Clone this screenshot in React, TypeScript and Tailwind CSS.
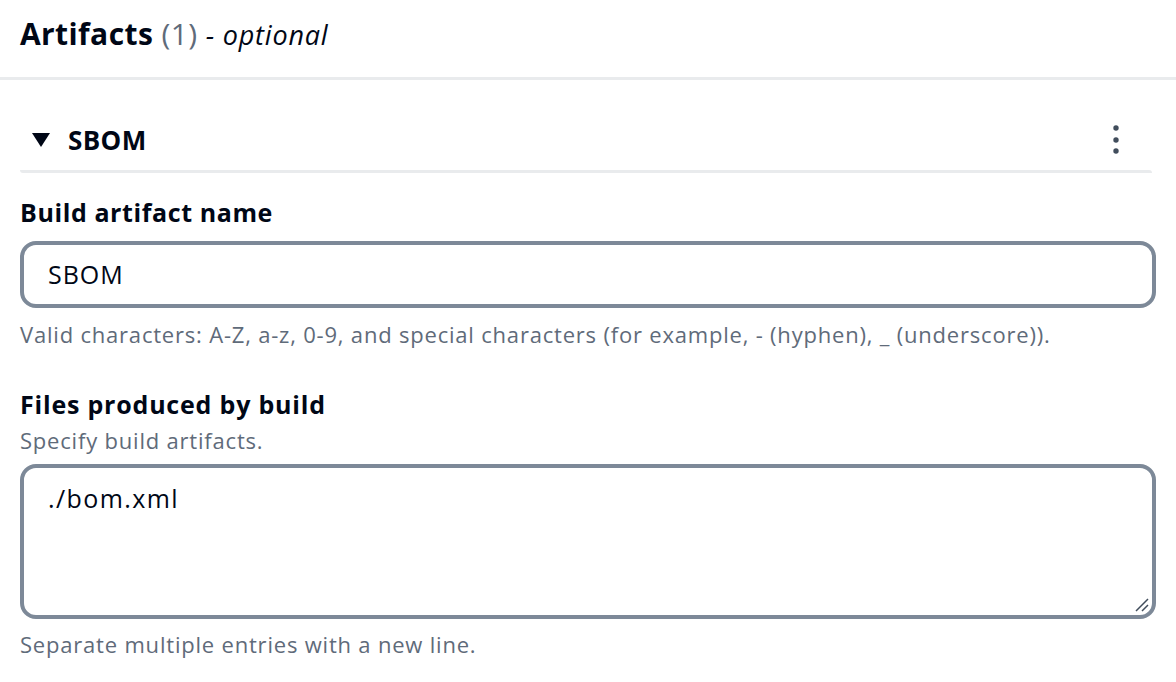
export default function App() {
  return (
    <div className="w-[1176px] h-[682px] bg-white overflow-hidden font-['Open_Sans',sans-serif] text-[#000716]">
      {/* Container header */}
      <div className="px-5 pt-[14px] pb-[22px]">
        <h2 className="text-[30px] leading-[40px] font-bold tracking-[0.4px]">
          Artifacts <span className="font-normal text-[#5f6b7a]">(1)</span>{" "}
          <span className="font-normal italic text-[27px] tracking-[0.8px]">- optional</span>
        </h2>
      </div>
      <div className="h-[3px] bg-[#e9ebed]" />

      <div className="px-5 pt-[40px]">
        {/* Expandable section header */}
        <div className="flex items-center justify-between h-[40px] pl-3 pr-[37px]">
          <div className="flex items-center gap-[18px]">
            <svg width="18" height="14" viewBox="0 0 18 14" aria-hidden>
              <path d="M0 0h18L9 14z" fill="#000716" />
            </svg>
            <span className="text-[26px] font-bold tracking-[0.4px]">SBOM</span>
          </div>
          <svg width="6" height="30" viewBox="0 0 6 30" aria-hidden>
            <circle cx="3" cy="3" r="2.7" fill="#414d5c" />
            <circle cx="3" cy="15" r="2.7" fill="#414d5c" />
            <circle cx="3" cy="26" r="2.7" fill="#414d5c" />
          </svg>
        </div>
        <div className="mt-[10px] mr-[4px] h-[3px] bg-[#e9ebed] rounded-bl-[3px] rounded-tr-[3px]" />

        {/* Build artifact name */}
        <div className="mt-[22px]">
          <label className="block text-[25px] leading-[34px] font-bold tracking-[0.6px]">Build artifact name</label>
          <div className="mt-[12px] h-[67px] border-[4px] border-[#7d8998] rounded-[16px] flex items-center px-[24px] text-[25px] tracking-[1px]">
            SBOM
          </div>
          <p className="mt-[10px] text-[22px] leading-[32px] tracking-[0.8px] text-[#5f6b7a]">
            Valid characters: A-Z, a-z, 0-9, and special characters (for example, - (hyphen), _ (underscore)).
          </p>
        </div>

        {/* Files produced by build */}
        <div className="mt-[37px]">
          <label className="block text-[25px] leading-[34px] font-bold tracking-[0.8px]">Files produced by build</label>
          <p className="mt-[3px] text-[22px] leading-[32px] tracking-[0.8px] text-[#5f6b7a]">Specify build artifacts.</p>
          <div className="relative mt-[8px] h-[155px] border-[4px] border-[#7d8998] rounded-[16px] px-[24px] pt-[12px] text-[25px] tracking-[1.4px]">
            ./bom.xml
            <svg className="absolute right-[2px] bottom-[2px]" width="16" height="16" viewBox="0 0 16 16" aria-hidden>
              <path d="M2 14L14 2M8 14L14 8" stroke="#414d5c" strokeWidth="1.5" />
            </svg>
          </div>
          <p className="mt-[9px] text-[22px] leading-[32px] tracking-[0.8px] text-[#5f6b7a]">Separate multiple entries with a new line.</p>
        </div>
      </div>
    </div>
  );
}
